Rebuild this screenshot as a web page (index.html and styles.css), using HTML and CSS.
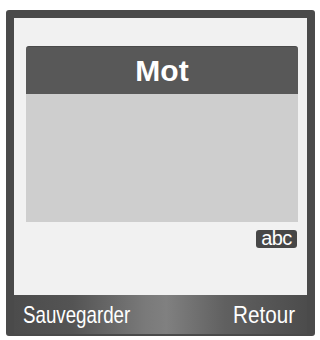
FILE: index.html
```html
<!DOCTYPE html>
<html lang="fr">
<head>
<meta charset="utf-8">
<link rel="stylesheet" href="styles.css">
</head>
<body>
<div class="frame">
  <div class="content">
    <div class="title">Mot</div>
    <div class="textarea"></div>
    <div class="mode-row"><span class="badge">abc</span></div>
  </div>
  <div class="softkeys">
    <span class="sk sk-left">Sauvegarder</span>
    <span class="sk sk-right">Retour</span>
  </div>
</div>
</body>
</html>
```
FILE: styles.css
```css
html, body {
  margin: 0;
  padding: 0;
  background: #ffffff;
}
body {
  width: 320px;
  height: 340px;
  overflow: hidden;
  font-family: "Liberation Sans", Arial, sans-serif;
}
.frame {
  box-sizing: border-box;
  margin: 10px 0 0 6px;
  width: 309px;
  height: 326px;
  border-style: solid;
  border-color: #4a4a4a;
  border-width: 8px 8px 2px 8px;
  border-radius: 3px;
  background: #f1f1f1;
  display: flex;
  flex-direction: column;
}
.content {
  flex: 1;
  padding: 28px 9px 0 12px;
  display: flex;
  flex-direction: column;
}
.title {
  height: 48px;
  background: #585858;
  border-top: 1px solid #4a4a4a;
  box-sizing: border-box;
  border-radius: 3px 3px 0 0;
  color: #ffffff;
  font-weight: bold;
  font-size: 30px;
  line-height: 48px;
  text-align: center;
}
.textarea {
  height: 128px;
  background: #cecece;
}
.mode-row {
  display: flex;
  justify-content: flex-end;
  margin-top: 8px;
  padding-right: 1px;
}
.badge {
  display: inline-block;
  width: 41px;
  height: 18px;
  background: #474747;
  border-radius: 3px;
  color: #ffffff;
  font-size: 20px;
  line-height: 17px;
  text-align: center;
  letter-spacing: -0.6px;
}
.softkeys {
  height: 39px;
  background: linear-gradient(90deg, #4c4c4c 0%, #545454 20%, #7a7a7a 45%, #808080 52%, #606060 72%, #4c4c4c 100%);
  display: flex;
  justify-content: space-between;
  align-items: center;
  padding: 0 12px 0 9px;
  color: #ffffff;
}
.sk {
  font-size: 24px;
  line-height: 24px;
  display: inline-block;
}
.sk-left {
  transform: scaleX(0.78);
  transform-origin: left center;
}
.sk-right {
  transform: scaleX(0.86);
  transform-origin: right center;
}
```
